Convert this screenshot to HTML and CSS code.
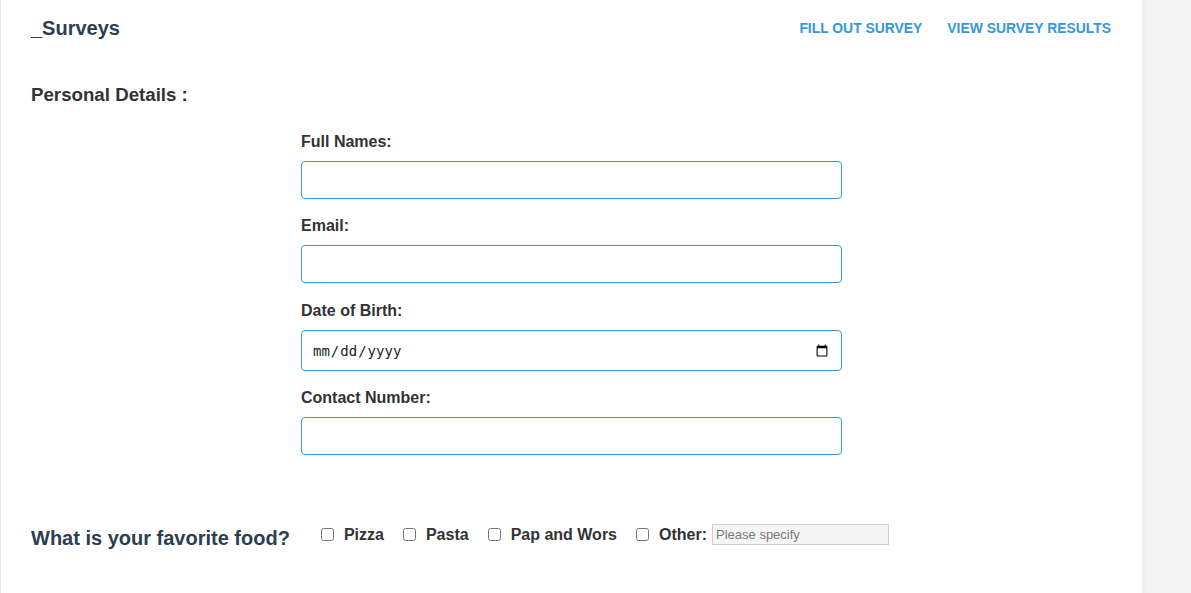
FILE: index.html
```html
<!DOCTYPE html>
<html lang="en">
<head>
<meta charset="utf-8">
<title>_Surveys</title>
<link rel="stylesheet" href="styles.css">
</head>
<body>
<div class="page">
  <header class="topbar">
    <div class="brand">_Surveys</div>
    <nav class="nav">
      <a href="#" class="nav-link">FILL OUT SURVEY</a>
      <a href="#" class="nav-link">VIEW SURVEY RESULTS</a>
    </nav>
  </header>

  <h3 class="section-title">Personal Details :</h3>

  <form class="details">
    <div class="field">
      <label class="field-label" for="fullname">Full Names:</label>
      <input class="field-input" type="text" id="fullname">
    </div>
    <div class="field field-wide">
      <label class="field-label" for="email">Email:</label>
      <input class="field-input" type="email" id="email">
    </div>
    <div class="field">
      <label class="field-label" for="dob">Date of Birth:</label>
      <input class="field-input date-input" type="date" id="dob">
    </div>
    <div class="field">
      <label class="field-label" for="contact">Contact Number:</label>
      <input class="field-input" type="text" id="contact">
    </div>
  </form>

  <div class="food-row">
    <h3 class="food-question">What is your favorite food?</h3>
    <label class="option"><input type="checkbox" class="check"><span class="option-text">Pizza</span></label>
    <label class="option"><input type="checkbox" class="check"><span class="option-text">Pasta</span></label>
    <label class="option"><input type="checkbox" class="check"><span class="option-text">Pap and Wors</span></label>
    <label class="option"><input type="checkbox" class="check"><span class="option-text">Other:</span><input type="text" class="other-input" placeholder="Please specify"></label>
  </div>
</div>
</body>
</html>
```

FILE: styles.css
```css
html, body {
  margin: 0;
  padding: 0;
}

body {
  background: #f3f3f3;
  font-family: "Liberation Sans", Arial, sans-serif;
  color: #333;
}

.page {
  width: 1142px;
  min-height: 100vh;
  background: #fff;
  border-left: 1px solid #e6e6e6;
  box-shadow: 1px 0 5px rgba(0, 0, 0, 0.05);
  box-sizing: border-box;
  overflow: hidden;
}

.topbar {
  height: 56px;
  display: flex;
  align-items: center;
  justify-content: space-between;
  padding: 0 31px 0 30px;
}

.brand {
  font-size: 20px;
  font-weight: bold;
  color: #2c3e50;
}

.nav {
  display: flex;
  gap: 25px;
}

.nav-link {
  font-size: 13.9px;
  font-weight: bold;
  color: #3498db;
  text-decoration: none;
}

.section-title {
  margin: 28px 0 0 30px;
  font-size: 18.7px;
  font-weight: bold;
  color: #333;
  line-height: 22px;
}

.details {
  width: 541px;
  margin: 27px auto 0;
}

.field {
  margin-bottom: 18px;
}

.field-wide {
  margin-bottom: 19px;
}

.field-label {
  display: block;
  font-size: 16px;
  font-weight: bold;
  line-height: 18px;
  color: #333;
  margin-bottom: 10px;
}

.field-input {
  display: block;
  width: 100%;
  height: 38px;
  box-sizing: border-box;
  border: 1px solid #3498db;
  border-radius: 4px;
  background: #fff;
  padding: 0 10px;
  font-size: 16px;
  font-family: "Liberation Sans", Arial, sans-serif;
  outline: none;
}

.date-input {
  height: 41px;
  font-family: "DejaVu Sans Mono", monospace;
  font-size: 14px;
  color: #222;
}

.food-row {
  display: flex;
  align-items: center;
  margin: 64px 0 0 30px;
  height: 31px;
}

.food-question {
  margin: 8px 27px 0 0;
  font-size: 20px;
  font-weight: bold;
  color: #2c3e50;
  line-height: 23px;
}

.option {
  display: flex;
  align-items: center;
  margin-right: 15px;
  font-size: 16px;
  font-weight: bold;
  color: #333;
}

.check {
  width: 13px;
  height: 13px;
  margin: 0 3px 0 4px;
}

.option-text {
  margin-left: 7px;
}

.other-input {
  width: 177px;
  height: 21px;
  box-sizing: border-box;
  margin-left: 5px;
  border: 1px solid #cfcfcf;
  background: #f5f5f5;
  padding: 0 3px;
  font-size: 13px;
  font-family: "Liberation Sans", Arial, sans-serif;
  color: #333;
  outline: none;
}

.other-input::placeholder {
  color: #7a7a7a;
}
```
